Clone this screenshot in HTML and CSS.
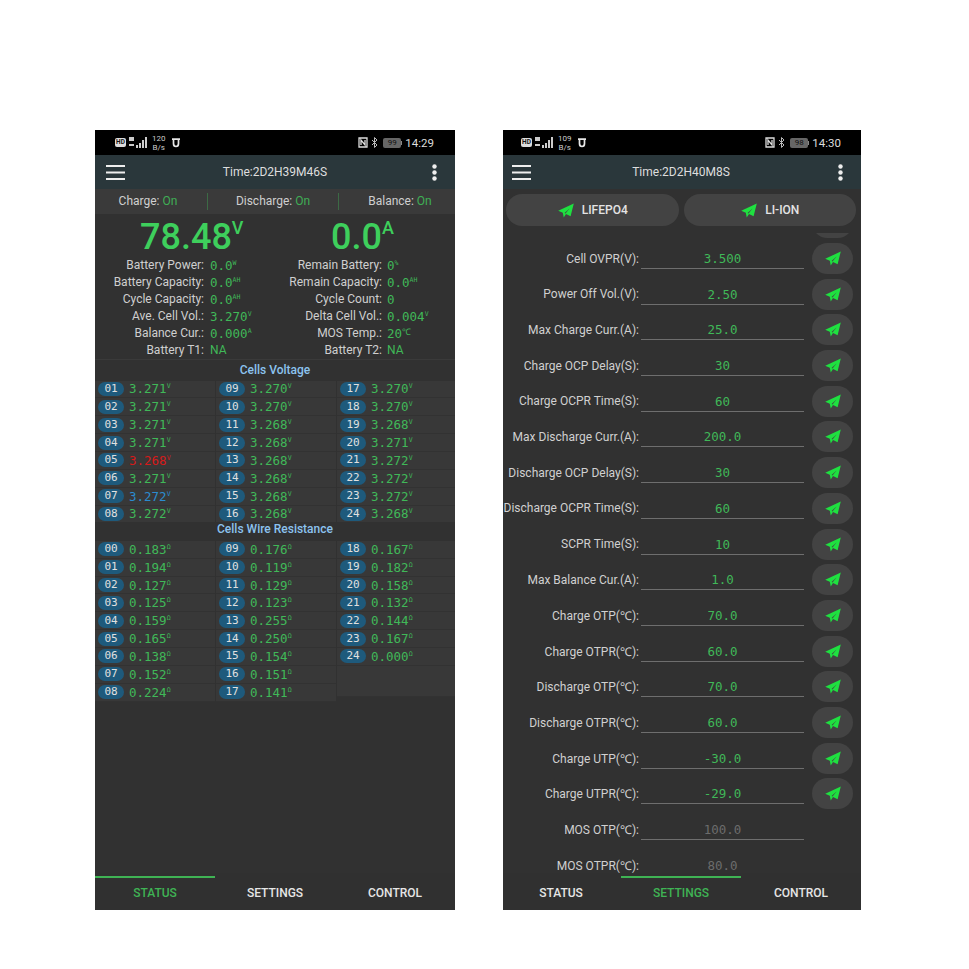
FILE: index.html
```html
<!DOCTYPE html>
<html lang="en">
<head>
<meta charset="utf-8">
<title>BMS</title>
<link rel="stylesheet" href="styles.css">
</head>
<body>
<svg class="defs" width="0" height="0"><defs>
<symbol id="plane" viewBox="0 0 24 24"><path d="M23 2 L1 12.500 L7.500 15.200 L8.800 22 L12 17 L18.500 20 Z M10 15.400 L17 9 L11.300 16.200 Z" fill-rule="evenodd"/></symbol>
<symbol id="menu" viewBox="0 0 19 15"><path d="M0 1h19M0 7.500h19M0 14h19" stroke="currentColor" stroke-width="1.800" fill="none"/></symbol>
<symbol id="dots" viewBox="0 0 5 17"><circle cx="2.500" cy="2.500" r="2.200"/><circle cx="2.500" cy="8.500" r="2.200"/><circle cx="2.500" cy="14.500" r="2.200"/></symbol>
<symbol id="signal" viewBox="0 0 18 11"><path d="M0 0h5v4H0zM0 7h5v2H0zM7 8h2v3H7zM10 6h2v5h-2zM13 3h2v8h-2zM16 0h2v11h-2z" fill="#ccc"/></symbol>
<symbol id="u" viewBox="0 0 10 10"><path d="M1 1.200h8M2.500 1.200v4.300a2.500 3 0 0 0 5 0V1.200" stroke="#e8e8e8" stroke-width="1.700" fill="none"/></symbol>
<symbol id="nfc" viewBox="0 0 10 11"><path d="M1 1h8v9H1zM3 8V3l4 5V3" stroke="#ddd" stroke-width="1.300" fill="none"/></symbol>
<symbol id="bt" viewBox="0 0 7 11"><path d="M1 3l5 5-2.500 2.500v-10L6 3 1 8" stroke="#bbb" stroke-width="1" fill="none"/></symbol>
</defs></svg>
<main class="stage">

<section class="phone phone-status">
  <div class="statusbar">
    <span class="hd">HD</span><svg class="i-signal"><use href="#signal"/></svg>
    <span class="speed">120<br>B/s</span><svg class="i-u"><use href="#u"/></svg>
    <span class="spacer"></span>
    <svg class="i-nfc"><use href="#nfc"/></svg><svg class="i-bt"><use href="#bt"/></svg>
    <span class="battery">99</span><span class="clock">14:29</span>
  </div>
  <header class="appbar">
    <svg class="i-menu"><use href="#menu"/></svg>
    <span class="title">Time:2D2H39M46S</span>
    <svg class="i-dots"><use href="#dots"/></svg>
  </header>
  <div class="switches">
    <div class="sw sw-a">Charge: <b>On</b></div>
    <div class="sw sw-b">Discharge: <b>On</b></div>
    <div class="sw sw-c">Balance: <b>On</b></div>
  </div>
  <div class="bigs">
    <div class="big big-v">78.48<sup>V</sup></div>
    <div class="big big-a">0.0<sup>A</sup></div>
  </div>
  <div class="stats">
    <span class="k">Battery Power:</span><span class="v">0.0<sup>W</sup></span><span class="k">Remain Battery:</span><span class="v">0<sup>%</sup></span>
    <span class="k">Battery Capacity:</span><span class="v">0.0<sup>AH</sup></span><span class="k">Remain Capacity:</span><span class="v">0.0<sup>AH</sup></span>
    <span class="k">Cycle Capacity:</span><span class="v">0.0<sup>AH</sup></span><span class="k">Cycle Count:</span><span class="v">0</span>
    <span class="k">Ave. Cell Vol.:</span><span class="v">3.270<sup>V</sup></span><span class="k">Delta Cell Vol.:</span><span class="v">0.004<sup>V</sup></span>
    <span class="k">Balance Cur.:</span><span class="v">0.000<sup>A</sup></span><span class="k">MOS Temp.:</span><span class="v">20<sup class="deg">℃</sup></span>
    <span class="k">Battery T1:</span><span class="v sans">NA</span><span class="k">Battery T2:</span><span class="v sans">NA</span>
  </div>
  <h2 class="heading">Cells Voltage</h2>
  <div class="cells">
    <div class="cell"><i>01</i><span>3.271<sup>V</sup></span></div><div class="cell"><i>09</i><span>3.270<sup>V</sup></span></div><div class="cell"><i>17</i><span>3.270<sup>V</sup></span></div>
    <div class="cell"><i>02</i><span>3.271<sup>V</sup></span></div><div class="cell"><i>10</i><span>3.270<sup>V</sup></span></div><div class="cell"><i>18</i><span>3.270<sup>V</sup></span></div>
    <div class="cell"><i>03</i><span>3.271<sup>V</sup></span></div><div class="cell"><i>11</i><span>3.268<sup>V</sup></span></div><div class="cell"><i>19</i><span>3.268<sup>V</sup></span></div>
    <div class="cell"><i>04</i><span>3.271<sup>V</sup></span></div><div class="cell"><i>12</i><span>3.268<sup>V</sup></span></div><div class="cell"><i>20</i><span>3.271<sup>V</sup></span></div>
    <div class="cell"><i>05</i><span class="low">3.268<sup>V</sup></span></div><div class="cell"><i>13</i><span>3.268<sup>V</sup></span></div><div class="cell"><i>21</i><span>3.272<sup>V</sup></span></div>
    <div class="cell"><i>06</i><span>3.271<sup>V</sup></span></div><div class="cell"><i>14</i><span>3.268<sup>V</sup></span></div><div class="cell"><i>22</i><span>3.272<sup>V</sup></span></div>
    <div class="cell"><i>07</i><span class="high">3.272<sup>V</sup></span></div><div class="cell"><i>15</i><span>3.268<sup>V</sup></span></div><div class="cell"><i>23</i><span>3.272<sup>V</sup></span></div>
    <div class="cell clip"><i>08</i><span>3.272<sup>V</sup></span></div><div class="cell clip"><i>16</i><span>3.268<sup>V</sup></span></div><div class="cell clip"><i>24</i><span>3.268<sup>V</sup></span></div>
  </div>
  <h2 class="heading heading-wire">Cells Wire Resistance</h2>
  <div class="cells wires">
    <div class="cell"><i>00</i><span>0.183<sup>Ω</sup></span></div><div class="cell"><i>09</i><span>0.176<sup>Ω</sup></span></div><div class="cell"><i>18</i><span>0.167<sup>Ω</sup></span></div>
    <div class="cell"><i>01</i><span>0.194<sup>Ω</sup></span></div><div class="cell"><i>10</i><span>0.119<sup>Ω</sup></span></div><div class="cell"><i>19</i><span>0.182<sup>Ω</sup></span></div>
    <div class="cell"><i>02</i><span>0.127<sup>Ω</sup></span></div><div class="cell"><i>11</i><span>0.129<sup>Ω</sup></span></div><div class="cell"><i>20</i><span>0.158<sup>Ω</sup></span></div>
    <div class="cell"><i>03</i><span>0.125<sup>Ω</sup></span></div><div class="cell"><i>12</i><span>0.123<sup>Ω</sup></span></div><div class="cell"><i>21</i><span>0.132<sup>Ω</sup></span></div>
    <div class="cell"><i>04</i><span>0.159<sup>Ω</sup></span></div><div class="cell"><i>13</i><span>0.255<sup>Ω</sup></span></div><div class="cell"><i>22</i><span>0.144<sup>Ω</sup></span></div>
    <div class="cell"><i>05</i><span>0.165<sup>Ω</sup></span></div><div class="cell"><i>14</i><span>0.250<sup>Ω</sup></span></div><div class="cell"><i>23</i><span>0.167<sup>Ω</sup></span></div>
    <div class="cell"><i>06</i><span>0.138<sup>Ω</sup></span></div><div class="cell"><i>15</i><span>0.154<sup>Ω</sup></span></div><div class="cell"><i>24</i><span>0.000<sup>Ω</sup></span></div>
    <div class="cell"><i>07</i><span>0.152<sup>Ω</sup></span></div><div class="cell"><i>16</i><span>0.151<sup>Ω</sup></span></div><div class="cell empty"></div>
    <div class="cell"><i>08</i><span>0.224<sup>Ω</sup></span></div><div class="cell"><i>17</i><span>0.141<sup>Ω</sup></span></div>
  </div>
  <span class="spacer"></span>
  <nav class="tabs">
    <a class="tab on">STATUS</a><a class="tab">SETTINGS</a><a class="tab">CONTROL</a>
  </nav>
</section>

<section class="phone phone-settings">
  <div class="statusbar">
    <span class="hd">HD</span><svg class="i-signal"><use href="#signal"/></svg>
    <span class="speed">109<br>B/s</span><svg class="i-u"><use href="#u"/></svg>
    <span class="spacer"></span>
    <svg class="i-nfc"><use href="#nfc"/></svg><svg class="i-bt"><use href="#bt"/></svg>
    <span class="battery">98</span><span class="clock">14:30</span>
  </div>
  <header class="appbar">
    <svg class="i-menu"><use href="#menu"/></svg>
    <span class="title">Time:2D2H40M8S</span>
    <svg class="i-dots"><use href="#dots"/></svg>
  </header>
  <div class="presets">
    <button class="preset"><svg class="i-plane"><use href="#plane"/></svg>LIFEPO4</button>
    <button class="preset"><svg class="i-plane"><use href="#plane"/></svg>LI-ION</button>
  </div>
  <div class="list">
    <div class="list-inner">
      <div class="row"><span class="lab"></span><span class="val blank"></span><button class="send"></button></div>
      <div class="row"><span class="lab">Cell OVPR(V):</span><span class="val">3.500</span><button class="send"><svg class="i-plane"><use href="#plane"/></svg></button></div>
      <div class="row"><span class="lab">Power Off Vol.(V):</span><span class="val">2.50</span><button class="send"><svg class="i-plane"><use href="#plane"/></svg></button></div>
      <div class="row"><span class="lab">Max Charge Curr.(A):</span><span class="val">25.0</span><button class="send"><svg class="i-plane"><use href="#plane"/></svg></button></div>
      <div class="row"><span class="lab">Charge OCP Delay(S):</span><span class="val">30</span><button class="send"><svg class="i-plane"><use href="#plane"/></svg></button></div>
      <div class="row"><span class="lab">Charge OCPR Time(S):</span><span class="val">60</span><button class="send"><svg class="i-plane"><use href="#plane"/></svg></button></div>
      <div class="row"><span class="lab">Max Discharge Curr.(A):</span><span class="val">200.0</span><button class="send"><svg class="i-plane"><use href="#plane"/></svg></button></div>
      <div class="row"><span class="lab">Discharge OCP Delay(S):</span><span class="val">30</span><button class="send"><svg class="i-plane"><use href="#plane"/></svg></button></div>
      <div class="row"><span class="lab">Discharge OCPR Time(S):</span><span class="val">60</span><button class="send"><svg class="i-plane"><use href="#plane"/></svg></button></div>
      <div class="row"><span class="lab">SCPR Time(S):</span><span class="val">10</span><button class="send"><svg class="i-plane"><use href="#plane"/></svg></button></div>
      <div class="row"><span class="lab">Max Balance Cur.(A):</span><span class="val">1.0</span><button class="send"><svg class="i-plane"><use href="#plane"/></svg></button></div>
      <div class="row"><span class="lab">Charge OTP(℃):</span><span class="val">70.0</span><button class="send"><svg class="i-plane"><use href="#plane"/></svg></button></div>
      <div class="row"><span class="lab">Charge OTPR(℃):</span><span class="val">60.0</span><button class="send"><svg class="i-plane"><use href="#plane"/></svg></button></div>
      <div class="row"><span class="lab">Discharge OTP(℃):</span><span class="val">70.0</span><button class="send"><svg class="i-plane"><use href="#plane"/></svg></button></div>
      <div class="row"><span class="lab">Discharge OTPR(℃):</span><span class="val">60.0</span><button class="send"><svg class="i-plane"><use href="#plane"/></svg></button></div>
      <div class="row"><span class="lab">Charge UTP(℃):</span><span class="val">-30.0</span><button class="send"><svg class="i-plane"><use href="#plane"/></svg></button></div>
      <div class="row"><span class="lab">Charge UTPR(℃):</span><span class="val">-29.0</span><button class="send"><svg class="i-plane"><use href="#plane"/></svg></button></div>
      <div class="row"><span class="lab">MOS OTP(℃):</span><span class="val off">100.0</span></div>
      <div class="row"><span class="lab">MOS OTPR(℃):</span><span class="val off">80.0</span></div>
    </div>
  </div>
  <nav class="tabs">
    <a class="tab">STATUS</a><a class="tab on">SETTINGS</a><a class="tab">CONTROL</a>
  </nav>
</section>

</main>
</body>
</html>
```
FILE: styles.css
```css
* { box-sizing: border-box; }
html, body { margin: 0; padding: 0; background: #fff; }
.defs { display: block; height: 0; }
.stage { display: flex; gap: 48px; padding: 130px 0 0 95px; font-family: Roboto, "Liberation Sans", sans-serif; }
.phone { height: 780px; display: flex; flex-direction: column; background: #313131; color: #d8d8d8; overflow: hidden; }
.phone-status { width: 360px; }
.phone-settings { width: 358px; }
.spacer { flex: 1; }

.statusbar { height: 25px; flex: none; background: #000; display: flex; align-items: center; padding: 0 21px 0 20px; color: #ccc; font-size: 11.5px; }
.phone-settings .statusbar { padding-left: 18px; padding-right: 20px; }
.hd { width: 11px; height: 9px; margin-right: 3px; border-radius: 2px; background: #ddd; color: #111; font-size: 6.500px; font-weight: 700; line-height: 9px; text-align: center; }
.i-signal { width: 18px; height: 11px; margin-right: 5px; }
.speed { font-size: 8px; line-height: 9px; text-align: center; margin-right: 5px; }
.i-u { width: 10px; height: 10px; }
.i-nfc { width: 10px; height: 11px; margin-right: 3px; }
.i-bt { width: 7px; height: 11px; margin-right: 5px; }
.battery { position: relative; width: 18px; height: 10px; border-radius: 2px; background: #666; color: #111; font-size: 8px; line-height: 10px; text-align: center; margin-right: 4px; }
.battery::after { content: ""; position: absolute; left: 18px; top: 3px; width: 1px; height: 4px; background: #888; }
.clock { font-size: 11.500px; color: #ddd; }

.appbar { height: 34px; flex: none; background: #2a373b; display: grid; grid-template-columns: 1fr auto 1fr; align-items: center; padding: 0 18px 0 11px; }
.phone-settings .appbar { padding-left: 9px; padding-right: 18px; }
.i-menu { width: 19px; height: 15px; color: #eee; }
.title { font-size: 12px; color: #dedede; margin-left: 7px; }
.i-dots { width: 5px; height: 17px; fill: #eee; justify-self: end; }

.switches { height: 25px; flex: none; background: #3a3a3a; display: grid; grid-template-columns: 112px 132px 116px; align-items: center; font-size: 12px; color: #cfcfcf; text-align: center; }
.sw { height: 17px; line-height: 17px; }
.sw b { font-weight: 400; color: #3fae55; }
.sw-a { padding-right: 6px; }
.sw-b { border-left: 1px solid #3c6a45; border-right: 1px solid #3c6a45; }
.sw-c { padding-left: 6px; }

.bigs { height: 43px; flex: none; display: flex; font-weight: 500; color: #3ecf5c; font-size: 36px; line-height: 47px; }
.big { position: relative; }
.big sup { font-size: 18px; font-weight: 500; line-height: 0; vertical-align: 15px; }
.big-v { margin-left: 45px; width: 191px; }

.stats { flex: none; display: grid; grid-template-columns: 109px 55px 110px 1fr; column-gap: 6px; grid-auto-rows: 17px; font-size: 12px; line-height: 17px; }
.stats .k { text-align: right; color: #cfcfcf; white-space: nowrap; }
.stats .k:nth-child(4n+3) { margin-right: -1px; }
.stats .v { font-family: "DejaVu Sans Mono", monospace; font-size: 12.500px; color: #40b858; white-space: nowrap; }
.stats .v.sans { font-family: Roboto, sans-serif; font-size: 12px; }
sup { font-size: 6.500px; line-height: 0; vertical-align: 5px; }
sup.deg { font-size: 9px; vertical-align: 3px; }

.heading { flex: none; margin: 0; height: 21.500px; line-height: 20px; font-size: 12px; font-weight: 500; color: #8cc3ef; text-align: center; border-top: 1px solid #3a3a3a; }
.cells { flex: none; display: grid; grid-template-columns: 120px 120px 118px; column-gap: 1px; grid-auto-rows: 17.860px; }
.cell { display: flex; align-items: center; background: #383838; border-bottom: 1px solid #323232; padding-left: 3px; gap: 5px; overflow: hidden; font-family: "DejaVu Sans Mono", monospace; font-size: 12.500px; color: #40b858; }
.cell i { width: 26px; height: 14px; border-radius: 7px; background: #1e5a7c; color: #e0e0e0; font-style: normal; font-size: 11px; line-height: 14px; text-align: center; flex: none; }
.cell .low { color: #d61a1a; }
.cell .high { color: #2b8cd0; }
.cell.clip { border-bottom: 0; height: 16px; }
.cell.empty { height: 31px; }
.heading-wire { height: 20px; line-height: 16px; margin-top: -2.500px; border-top: 0; }

.tabs { flex: none; height: 37px; display: flex; background: #303030; padding-top: 3px; font-size: 12px; font-weight: 500; }
.tab { width: 120px; height: 34px; line-height: 30px; text-align: center; color: #e6e6e6; border-top: 2px solid transparent; }
.tab.on { color: #3fb354; border-top-color: #3fb354; }
.phone-settings .tabs { margin-left: -2px; }

.presets { flex: none; height: 44px; display: flex; gap: 5px; padding: 5px 5px 7px 3px; }
.preset { flex: 1; height: 32px; border: 0; border-radius: 16px; background: #434343; color: #e4e4e4; font: 500 12px Roboto, sans-serif; display: flex; align-items: center; justify-content: center; gap: 7px; }
.i-plane { width: 18px; height: 17px; fill: #1fe040; }

.list { flex: 1; overflow: hidden; min-height: 0; }
.list-inner { margin-top: -28px; }
.row { height: 35.700px; display: grid; grid-template-columns: 135px 163px 41px; align-items: center; column-gap: 3px; }
.row .send { margin-left: 5px; }
.lab { text-align: right; font-size: 12px; color: #d0d0d0; white-space: nowrap; margin-right: -1px; }
.val { height: 21px; line-height: 21px; border-bottom: 1px solid #6e6e6e; text-align: center; font-family: "DejaVu Sans Mono", monospace; font-size: 12.500px; color: #40b858; }
.val.off { color: #6c6c6c; }
.val.blank { border: 0; }
.send { width: 41px; height: 31px; border: 0; border-radius: 16px; background: #434343; display: flex; align-items: center; justify-content: center; padding: 0; }
```
